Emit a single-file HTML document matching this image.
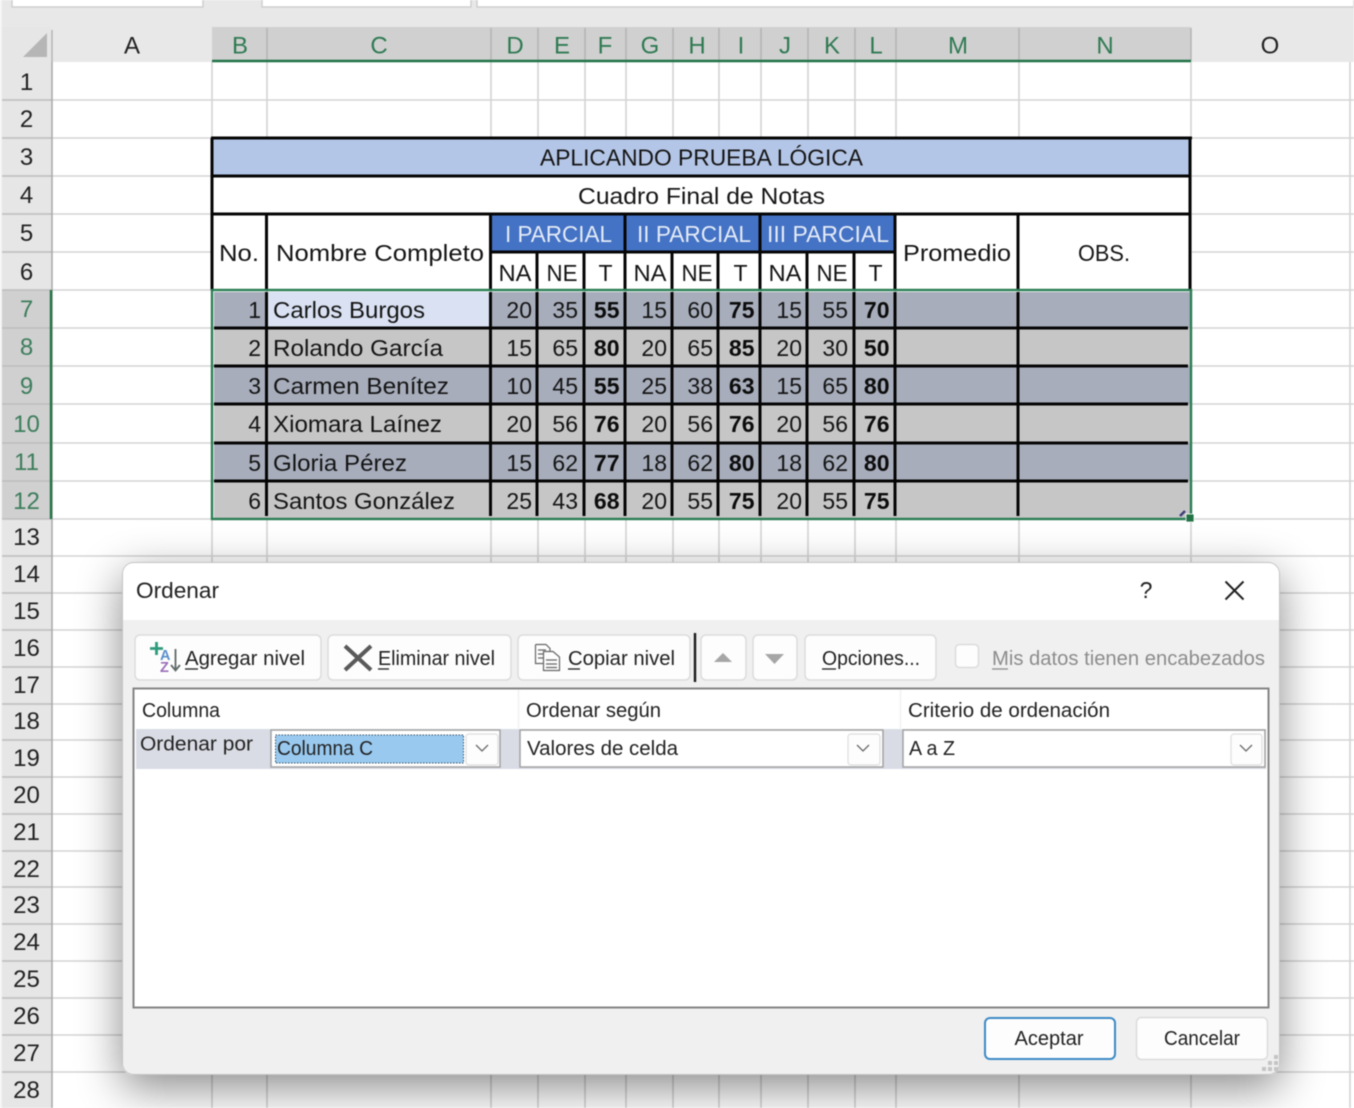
<!DOCTYPE html>
<html lang="es"><head><meta charset="utf-8"><title>Ordenar</title>
<style>
html,body{margin:0;padding:0;background:#fff;width:1354px;height:1108px;overflow:hidden}
svg{display:block;position:absolute;left:0;top:0;filter:blur(.4px)}
text{font-family:"Liberation Sans",sans-serif;fill:#141414}
.c{font-size:23px}
.b{font-size:23px;font-weight:bold;fill:#0c0c0c}
.e text,text.e{text-anchor:end}
.m text,text.m{text-anchor:middle}
.h{font-size:24px;fill:#222}
.g{font-size:24px;fill:#2f7a52}
.r{font-size:24px;fill:#222}
.rs{font-size:24px;fill:#3d7d5c}
.d{font-size:20px;fill:#222}
</style></head><body>
<svg width="1354" height="1108" viewBox="0 0 1354 1108" xmlns="http://www.w3.org/2000/svg">
<defs><filter id="sh" x="-15%" y="-15%" width="130%" height="130%"><feDropShadow dx="0" dy="13" stdDeviation="22" flood-color="#000" flood-opacity=".46"/></filter></defs>
<rect width="1354" height="1108" fill="#fff"/>
<!-- top bar -->
<rect width="1354" height="62" fill="#e8e8e8"/>
<path d="M12 0V7H203V0M262 0V7H471V0M477 0V7H1354V0" fill="#fff" stroke="#cfcfcf" stroke-width="1.5"/>
<!-- gutter -->
<rect x="2" y="27" width="50" height="1081" fill="#e6e6e6"/>
<rect x="0" y="0" width="2" height="1108" fill="#f4f4f4"/>
<rect x="212" y="27" width="979" height="34" fill="#d0d0d0"/>
<rect x="2" y="290" width="50" height="229" fill="#d0d0d0"/>
<path d="M23 57L47 33V57Z" fill="#b6b6b6"/>
<path d="M52 30V62M267 28V61M491 28V61M538 28V61M585 28V61M626 28V61M673 28V61M719 28V61M761 28V61M808 28V61M855 28V61M896 28V61M1019 28V61M1191 28V61" stroke="#b4b4b4" stroke-width="1.5" fill="none"/>
<!-- grid -->
<path d="M52 100H1354M52 138H1354M52 176H1354M52 214H1354M52 252H1354M52 290H1354M52 328H1354M52 366H1354M52 404H1354M52 443H1354M52 481H1354M52 519H1354M52 556H1354M52 593H1354M52 630H1354M52 667H1354M52 704H1354M52 740H1354M52 777H1354M52 814H1354M52 851H1354M52 887H1354M52 924H1354M52 961H1354M52 998H1354M52 1035H1354M52 1072H1354M212 62V1108M267 62V1108M491 62V1108M538 62V1108M585 62V1108M626 62V1108M673 62V1108M719 62V1108M761 62V1108M808 62V1108M855 62V1108M896 62V1108M1019 62V1108M1191 62V1108M1350 62V1108" stroke="#d4d4d4" stroke-width="1.6" fill="none"/>
<path d="M2 100H52M2 138H52M2 176H52M2 214H52M2 252H52M2 290H52M2 328H52M2 366H52M2 404H52M2 443H52M2 481H52M2 519H52M2 556H52M2 593H52M2 630H52M2 667H52M2 704H52M2 740H52M2 777H52M2 814H52M2 851H52M2 887H52M2 924H52M2 961H52M2 998H52M2 1035H52M2 1072H52" stroke="#bcbcbc" stroke-width="1.5" fill="none"/>
<path d="M52 62V1108" stroke="#a8a8a8" stroke-width="1.5"/>
<!-- col headers -->
<g class="m">
<text class="h" x="132" y="53.500">A</text><text class="g" x="240" y="53.500">B</text><text class="g" x="379" y="53.500">C</text><text class="g" x="515" y="53.500">D</text><text class="g" x="562" y="53.500">E</text><text class="g" x="605" y="53.500">F</text><text class="g" x="650" y="53.500">G</text><text class="g" x="697" y="53.500">H</text><text class="g" x="741" y="53.500">I</text><text class="g" x="785" y="53.500">J</text><text class="g" x="832" y="53.500">K</text><text class="g" x="876" y="53.500">L</text><text class="g" x="958" y="53.500">M</text><text class="g" x="1105" y="53.500">N</text><text class="h" x="1270" y="53.500">O</text>
</g>
<!-- row numbers -->
<g class="m">
<text class="r" x="26.500" y="90">1</text><text class="r" x="26.500" y="127">2</text><text class="r" x="26.500" y="165">3</text><text class="r" x="26.500" y="203">4</text><text class="r" x="26.500" y="241">5</text><text class="r" x="26.500" y="280">6</text>
<text class="rs" x="26.500" y="317">7</text><text class="rs" x="26.500" y="355">8</text><text class="rs" x="26.500" y="394">9</text><text class="rs" x="26.500" y="432">10</text><text class="rs" x="26.500" y="470">11</text><text class="rs" x="26.500" y="509">12</text>
<text class="r" x="26.500" y="545">13</text><text class="r" x="26.500" y="582">14</text><text class="r" x="26.500" y="619">15</text><text class="r" x="26.500" y="656">16</text><text class="r" x="26.500" y="693">17</text><text class="r" x="26.500" y="729">18</text><text class="r" x="26.500" y="766">19</text><text class="r" x="26.500" y="803">20</text><text class="r" x="26.500" y="840">21</text><text class="r" x="26.500" y="877">22</text><text class="r" x="26.500" y="913">23</text><text class="r" x="26.500" y="950">24</text><text class="r" x="26.500" y="987">25</text><text class="r" x="26.500" y="1024">26</text><text class="r" x="26.500" y="1061">27</text><text class="r" x="26.500" y="1098">28</text>
</g>
<!-- table fills -->
<rect x="212" y="138" width="979" height="152" fill="#fff"/>
<rect x="212" y="138" width="979" height="38" fill="#b4c6e7"/>
<rect x="491" y="214" width="405" height="38" fill="#4472c4"/>
<rect x="214" y="292" width="976" height="36" fill="#a7adbb"/>
<rect x="214" y="328" width="976" height="38" fill="#c6c6c6"/>
<rect x="214" y="366" width="976" height="38" fill="#a7adbb"/>
<rect x="214" y="404" width="976" height="39" fill="#c6c6c6"/>
<rect x="214" y="443" width="976" height="38" fill="#a7adbb"/>
<rect x="214" y="481" width="976" height="37" fill="#c6c6c6"/>
<rect x="267" y="292" width="224" height="36" fill="#d9e1f2"/>
<!-- table borders -->
<path d="M211 138H1192M212 176H1191M212 214H1191M491 252H896M212 138V290M1190 138V290M266.500 214V290M490.500 214V290M625 214V290M760 214V290M895 214V290M1018 214V290M537 252V290M584 252V290M672 252V290M718 252V290M807 252V290M854 252V290" stroke="#050505" stroke-width="3" fill="none"/>
<path d="M214 328H1188M214 366H1188M214 404H1188M214 443H1188M214 481H1188M266.500 292V516M490.500 292V516M537 292V516M584 292V516M625 292V516M672 292V516M718 292V516M760 292V516M807 292V516M854 292V516M895 292V516M1018 292V516" stroke="#050505" stroke-width="3" fill="none"/>
<!-- header text -->
<text class="c" x="540" y="165.500" textLength="323" lengthAdjust="spacingAndGlyphs">APLICANDO PRUEBA LÓGICA</text>
<text class="c" x="578" y="204" textLength="247" lengthAdjust="spacingAndGlyphs">Cuadro Final de Notas</text>
<text class="c" x="219" y="261" textLength="40" lengthAdjust="spacingAndGlyphs">No.</text>
<text class="c" x="276" y="261" textLength="208" lengthAdjust="spacingAndGlyphs">Nombre Completo</text>
<text class="c" x="903" y="261" textLength="108" lengthAdjust="spacingAndGlyphs">Promedio</text>
<text class="c" x="1078" y="261" textLength="52" lengthAdjust="spacingAndGlyphs">OBS.</text>
<text class="c" style="fill:#e4ebf7" x="505" y="242" textLength="107" lengthAdjust="spacingAndGlyphs">I PARCIAL</text>
<text class="c" style="fill:#e4ebf7" x="637" y="242" textLength="114" lengthAdjust="spacingAndGlyphs">II PARCIAL</text>
<text class="c" style="fill:#e4ebf7" x="767" y="242" textLength="122" lengthAdjust="spacingAndGlyphs">III PARCIAL</text>
<g class="m">
<text class="c" x="515" y="281" textLength="33" lengthAdjust="spacingAndGlyphs">NA</text><text class="c" x="562" y="281" textLength="31" lengthAdjust="spacingAndGlyphs">NE</text><text class="c" x="605.500" y="281">T</text>
<text class="c" x="650" y="281" textLength="33" lengthAdjust="spacingAndGlyphs">NA</text><text class="c" x="697" y="281" textLength="31" lengthAdjust="spacingAndGlyphs">NE</text><text class="c" x="740.500" y="281">T</text>
<text class="c" x="785" y="281" textLength="33" lengthAdjust="spacingAndGlyphs">NA</text><text class="c" x="832" y="281" textLength="31" lengthAdjust="spacingAndGlyphs">NE</text><text class="c" x="875.500" y="281">T</text>
</g>
<!-- names -->
<text class="c" x="273" y="318" textLength="152" lengthAdjust="spacingAndGlyphs">Carlos Burgos</text>
<text class="c" x="273" y="356" textLength="170" lengthAdjust="spacingAndGlyphs">Rolando García</text>
<text class="c" x="273" y="394" textLength="176" lengthAdjust="spacingAndGlyphs">Carmen Benítez</text>
<text class="c" x="273" y="432" textLength="169" lengthAdjust="spacingAndGlyphs">Xiomara Laínez</text>
<text class="c" x="273" y="471" textLength="134" lengthAdjust="spacingAndGlyphs">Gloria Pérez</text>
<text class="c" x="273" y="509" textLength="182" lengthAdjust="spacingAndGlyphs">Santos González</text>
<!-- data -->
<g class="e">
<text class="c" x="261" y="318">1</text><text class="c" x="532" y="318">20</text><text class="c" x="578" y="318">35</text><text class="b" x="619.500" y="318">55</text><text class="c" x="667" y="318">15</text><text class="c" x="713" y="318">60</text><text class="b" x="754.500" y="318">75</text><text class="c" x="802" y="318">15</text><text class="c" x="848" y="318">55</text><text class="b" x="889.500" y="318">70</text>
<text class="c" x="261" y="356">2</text><text class="c" x="532" y="356">15</text><text class="c" x="578" y="356">65</text><text class="b" x="619.500" y="356">80</text><text class="c" x="667" y="356">20</text><text class="c" x="713" y="356">65</text><text class="b" x="754.500" y="356">85</text><text class="c" x="802" y="356">20</text><text class="c" x="848" y="356">30</text><text class="b" x="889.500" y="356">50</text>
<text class="c" x="261" y="394">3</text><text class="c" x="532" y="394">10</text><text class="c" x="578" y="394">45</text><text class="b" x="619.500" y="394">55</text><text class="c" x="667" y="394">25</text><text class="c" x="713" y="394">38</text><text class="b" x="754.500" y="394">63</text><text class="c" x="802" y="394">15</text><text class="c" x="848" y="394">65</text><text class="b" x="889.500" y="394">80</text>
<text class="c" x="261" y="432">4</text><text class="c" x="532" y="432">20</text><text class="c" x="578" y="432">56</text><text class="b" x="619.500" y="432">76</text><text class="c" x="667" y="432">20</text><text class="c" x="713" y="432">56</text><text class="b" x="754.500" y="432">76</text><text class="c" x="802" y="432">20</text><text class="c" x="848" y="432">56</text><text class="b" x="889.500" y="432">76</text>
<text class="c" x="261" y="471">5</text><text class="c" x="532" y="471">15</text><text class="c" x="578" y="471">62</text><text class="b" x="619.500" y="471">77</text><text class="c" x="667" y="471">18</text><text class="c" x="713" y="471">62</text><text class="b" x="754.500" y="471">80</text><text class="c" x="802" y="471">18</text><text class="c" x="848" y="471">62</text><text class="b" x="889.500" y="471">80</text>
<text class="c" x="261" y="509">6</text><text class="c" x="532" y="509">25</text><text class="c" x="578" y="509">43</text><text class="b" x="619.500" y="509">68</text><text class="c" x="667" y="509">20</text><text class="c" x="713" y="509">55</text><text class="b" x="754.500" y="509">75</text><text class="c" x="802" y="509">20</text><text class="c" x="848" y="509">55</text><text class="b" x="889.500" y="509">75</text>
</g>
<!-- selection -->
<path d="M212 61H1191" stroke="#217346" stroke-width="2.4"/>
<path d="M51 290V519" stroke="#217346" stroke-width="2.4"/>
<rect x="212" y="290" width="979" height="229" fill="none" stroke="#2a7d53" stroke-width="2.4"/>
<rect x="1186" y="514" width="8" height="8" fill="#217346" stroke="#fff" stroke-width=".8"/>
<path d="M1180 516L1185 511" stroke="#3c3c78" stroke-width="2.5"/>
<!-- dialog -->
<rect x="122" y="562" width="1158" height="513" rx="11" fill="#f0f0f0" filter="url(#sh)"/>
<path d="M122 620V573a11 11 0 0 1 11-11H1269a11 11 0 0 1 11 11V620Z" fill="#fff"/>
<rect x="122.500" y="562.500" width="1157" height="512" rx="11" fill="none" stroke="#c4c4c4"/>
<text class="d" x="136" y="598" textLength="83" lengthAdjust="spacingAndGlyphs" style="font-size:22px">Ordenar</text>
<text class="d m" x="1146" y="598" style="font-size:23px">?</text>
<path d="M1225.500 581.500L1243.500 599.500M1243.500 581.500L1225.500 599.500" stroke="#222" stroke-width="2" fill="none"/>
<!-- toolbar buttons -->
<g fill="#fdfdfd" stroke="#dcdcdc" stroke-width="1.500">
<rect x="135" y="635" width="186" height="45" rx="5"/>
<rect x="328" y="635" width="183" height="45" rx="5"/>
<rect x="518" y="635" width="172" height="45" rx="5"/>
<rect x="701" y="635" width="45" height="45" rx="5"/>
<rect x="753" y="635" width="44" height="45" rx="5"/>
<rect x="805" y="635" width="131" height="45" rx="5"/>
<rect x="955.500" y="644.500" width="23" height="23" rx="4"/>
</g>
<path d="M695 633V682" stroke="#1a1a1a" stroke-width="2.4"/>
<!-- add icon -->
<path d="M156.500 642V655M150 648.500H163" stroke="#2f9a7c" stroke-width="2.8" fill="none"/>
<text x="160" y="660" style="font-size:14.500px;font-weight:bold;fill:#5b8fcb">A</text>
<text x="160" y="672" style="font-size:14.500px;font-weight:bold;fill:#9a6fb8">Z</text>
<path d="M175.500 649V670M171 665L175.500 670.500L180 665" stroke="#5f6a66" stroke-width="1.800" fill="none"/>
<text class="d" x="185" y="665" textLength="120" lengthAdjust="spacingAndGlyphs">Agregar nivel</text>
<path d="M185 669H198" stroke="#222" stroke-width="1.300"/>
<!-- delete icon -->
<path d="M345 646L371 670M371 646L345 670" stroke="#5a5a5a" stroke-width="4" fill="none"/>
<text class="d" x="378" y="665" textLength="117" lengthAdjust="spacingAndGlyphs">Eliminar nivel</text>
<path d="M378 669H389" stroke="#222" stroke-width="1.300"/>
<!-- copy icon -->
<path d="M535.500 644.500H546L550 648.500V651M535.500 644.500V663.500H543M538 650H546M538 654H544M538 658H543" stroke="#666" stroke-width="1.200" fill="none"/>
<path d="M543.500 651.500H553L559.500 657V670.500H543.500ZM546 660H557M546 664H557M546 667.500H557" stroke="#666" stroke-width="1.200" fill="#fdfdfd"/>
<text class="d" x="568" y="665" textLength="107" lengthAdjust="spacingAndGlyphs">Copiar nivel</text>
<path d="M568 669H580" stroke="#222" stroke-width="1.300"/>
<!-- arrows -->
<path d="M714 662L723 653L732 662Z" fill="#a6a6a6"/>
<path d="M765 654H784L774.500 664Z" fill="#a6a6a6"/>
<text class="d" x="822" y="665" textLength="98" lengthAdjust="spacingAndGlyphs">Opciones...</text>
<path d="M822 669H836" stroke="#222" stroke-width="1.300"/>
<text class="d" x="992" y="665" textLength="273" lengthAdjust="spacingAndGlyphs" style="fill:#8c8c8c">Mis datos tienen encabezados</text>
<path d="M992 669H1008" stroke="#8c8c8c" stroke-width="1.300"/>
<!-- list -->
<rect x="133.500" y="688.500" width="1135" height="319" fill="#fff" stroke="#858585" stroke-width="2"/>
<path d="M518.500 690V728M900.500 690V728" stroke="#f0f0f0" stroke-width="1.500"/>
<text class="d" x="142" y="717" textLength="78" lengthAdjust="spacingAndGlyphs">Columna</text>
<text class="d" x="526" y="717" textLength="135" lengthAdjust="spacingAndGlyphs">Ordenar según</text>
<text class="d" x="908" y="717" textLength="202" lengthAdjust="spacingAndGlyphs">Criterio de ordenación</text>
<rect x="136" y="729" width="1130" height="40" fill="#d9dce4"/>
<text class="d" x="140" y="750.500" textLength="113" lengthAdjust="spacingAndGlyphs">Ordenar por</text>
<!-- combos -->
<g fill="#fff" stroke="#a2a2a2" stroke-width="1.500">
<rect x="271" y="730" width="229" height="37"/>
<rect x="520" y="730" width="363" height="37"/>
<rect x="903" y="730" width="362" height="37"/>
</g>
<rect x="275.500" y="735" width="188" height="28" fill="#99c9ef" stroke="#33506a" stroke-width="1" stroke-dasharray="1.500 1.500"/>
<g fill="#fdfdfd" stroke="#dedede" stroke-width="1.200">
<rect x="466" y="734" width="32" height="31" rx="3"/>
<rect x="848" y="734" width="32" height="31" rx="3"/>
<rect x="1231" y="734" width="31" height="31" rx="3"/>
</g>
<path d="M476 745L482 751L488 745M857 745L863 751L869 745M1240 745L1246 751L1252 745" stroke="#6a6a6a" stroke-width="1.300" fill="none"/>
<text class="d" x="277" y="755" textLength="96" lengthAdjust="spacingAndGlyphs">Columna C</text>
<text class="d" x="527" y="755" textLength="151" lengthAdjust="spacingAndGlyphs">Valores de celda</text>
<text class="d" x="909" y="755" textLength="46" lengthAdjust="spacingAndGlyphs">A a Z</text>
<!-- footer buttons -->
<rect x="985" y="1018" width="130" height="41" rx="5" fill="#fdfdfd" stroke="#3c8ac6" stroke-width="2"/>
<rect x="1136.500" y="1017.500" width="131" height="42" rx="5" fill="#fdfdfd" stroke="#dcdcdc" stroke-width="1.500"/>
<text class="d m" x="1049" y="1045" textLength="69" lengthAdjust="spacingAndGlyphs">Aceptar</text>
<text class="d m" x="1202" y="1045" textLength="76" lengthAdjust="spacingAndGlyphs">Cancelar</text>
<!-- grip -->
<g fill="#c4c4c4">
<rect x="1274" y="1055" width="4" height="4"/><rect x="1268" y="1061" width="4" height="4"/><rect x="1274" y="1061" width="4" height="4"/><rect x="1262" y="1067" width="4" height="4"/><rect x="1268" y="1067" width="4" height="4"/><rect x="1274" y="1067" width="4" height="4"/>
</g>
</svg>
</body></html>
